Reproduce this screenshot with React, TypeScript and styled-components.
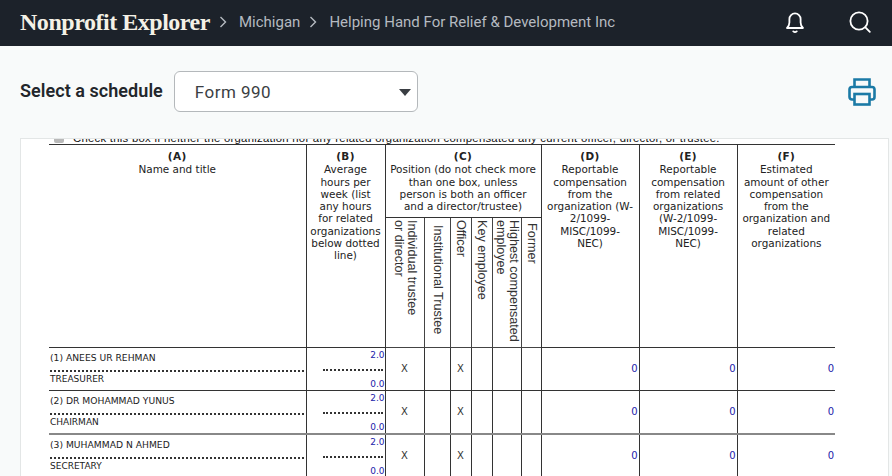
import React from "react";
import styled, { createGlobalStyle } from "styled-components";

const Global = createGlobalStyle`
  html, body { margin: 0; padding: 0; height: 100%; overflow: hidden; background: #f8fafa; }
  #root { height: 100%; }
  * { box-sizing: border-box; }
`;

const Page = styled.div`
  display: flex;
  flex-direction: column;
  height: 476px;
  background: #f8fafa;
`;

const TopBar = styled.header`
  display: flex;
  align-items: center;
  height: 46px;
  flex: none;
  padding: 0 20px 2px;
  background: #1c222a;
`;

const Brand = styled.span`
  font: bold 24px/24px "Liberation Serif", serif;
  letter-spacing: -0.47px;
  color: #f4f1e6;
`;

const Crumb = styled.span`
  font: 400 15px/20px Roboto, sans-serif;
  color: #b5bac0;
`;

const Chevron = styled.svg`
  flex: none;
  margin: 0 12px 0 9px;
  width: 8px;
  height: 12px;
  fill: none;
  stroke: #b5bac0;
  stroke-width: 1.4;
`;

const BarIcons = styled.div`
  display: flex;
  align-items: center;
  gap: 43px;
  margin-left: auto;
  margin-right: 1px;
`;

const BarIcon = styled.svg`
  display: block;
  width: 22px;
  height: 24px;
  fill: none;
  stroke: #fff;
  stroke-width: 1.8;
  stroke-linecap: round;
  stroke-linejoin: round;
`;

const Toolbar = styled.div`
  display: flex;
  align-items: center;
  height: 92px;
  flex: none;
  padding: 0 16px 1px 20px;
`;

const SelectLabel = styled.label`
  font: 600 18px/22px Roboto, sans-serif;
  letter-spacing: 0.05px;
  color: #22262b;
  margin: 0 11px 2px 0;
`;

const SelectWrap = styled.div`
  position: relative;
  width: 244px;
  height: 41px;
`;

const Select = styled.select`
  appearance: none;
  width: 100%;
  height: 100%;
  padding: 0 20px;
  border: 1px solid #b4b8bb;
  border-radius: 6px;
  background: #fff;
  font: 400 17px Roboto, sans-serif;
  letter-spacing: 0.45px;
  color: #3a3e43;
`;

const Caret = styled.span`
  position: absolute;
  top: 18px;
  right: 7px;
  width: 0;
  height: 0;
  border-left: 6.5px solid transparent;
  border-right: 6.5px solid transparent;
  border-top: 7px solid #3a3e43;
  pointer-events: none;
`;

const PrintIcon = styled.svg`
  display: block;
  margin-left: auto;
  width: 28px;
  height: 28px;
  fill: none;
  stroke: #1b7aa6;
  stroke-width: 2.6;
`;

const DocPanel = styled.div`
  flex: 1;
  min-height: 0;
  margin: 0 3px 0 20px;
  padding-left: 28px;
  overflow: hidden;
  background: #fff;
  border: 1px solid #e3e6e6;
  border-bottom: 0;
`;

const CheckLine = styled.div`
  display: flex;
  align-items: center;
  height: 12px;
  margin-top: -7px;
  padding-left: 5px;
  gap: 9px;
  font: 11.3px/12px "Liberation Sans", Arial, sans-serif;
  letter-spacing: 0.28px;
  white-space: nowrap;
  color: #111;
`;

const CheckBox = styled.span`
  width: 10px;
  height: 10px;
  background: #b9b9b9;
  border-radius: 2px;
`;

const FormTable = styled.table`
  table-layout: fixed;
  width: 786px;
  border-collapse: collapse;
  font: 10.45px/12.3px "DejaVu Sans", Verdana, sans-serif;
  color: #222;
`;

const HeadCell = styled.th`
  padding: 5px 0 0;
  vertical-align: top;
  font-weight: 400;
  text-align: center;
  white-space: nowrap;
  border: 1px solid #333;
  &:first-child { border-left: 0; }
  &:last-child { border-right: 0; }
`;

const Letter = styled.b`
  display: block;
  margin-bottom: 1px;
  font-weight: 700;
  letter-spacing: 0.4px;
`;

const SideCell = styled.th`
  padding: 2px 0 0;
  height: 129px;
  vertical-align: top;
  font-weight: 400;
  border: 1px solid #444;
`;

const SideText = styled.span<{ $drop: number }>`
  display: block;
  width: fit-content;
  height: 122px;
  margin: ${(p) => p.$drop}px auto 0;
  writing-mode: vertical-rl;
  white-space: nowrap;
  text-align: left;
  font: 12.6px/13px "Liberation Sans", Arial, sans-serif;
  color: #333;
`;

const Row = styled.tr`
  height: 43px;
`;

const Cell = styled.td<{ $heavy?: boolean }>`
  padding: 0;
  height: 43px;
  border: 1px solid #333;
  border-bottom: ${(p) => (p.$heavy ? "2px solid #888" : "1px solid #333")};
  &:first-child { border-left: 0; }
  &:last-child { border-right: 0; }
`;

const NameStack = styled.div`
  display: flex;
  flex-direction: column;
  height: 42px;
  padding: 4px 2px 0 1px;
  font: 9.2px/12px "DejaVu Sans", Verdana, sans-serif;
  color: #222;
`;

const NameText = styled.span`
  height: 18px;
`;

const TitleText = styled.span`
  margin-top: 1px;
  font-size: 9px;
`;

const DotRule = styled.div`
  height: 0;
  border-top: 2px dotted #333;
`;

const HoursStack = styled.div`
  display: flex;
  flex-direction: column;
  justify-content: space-between;
  height: 42px;
  padding-top: 2px;
  text-align: right;
  font: 9px/11px "DejaVu Sans", Verdana, sans-serif;
  color: #2222aa;
`;

const HoursRule = styled(DotRule)`
  width: 60px;
  margin-left: auto;
  margin-right: 2px;
`;

const Mark = styled.div`
  text-align: center;
  font: 10px/12px "DejaVu Sans", Verdana, sans-serif;
  color: #333;
`;

const Amount = styled.div`
  padding-right: 1px;
  text-align: right;
  font: 10px/12px "DejaVu Sans", Verdana, sans-serif;
  color: #2222aa;
`;

const people = [
  { name: "(1) ANEES UR REHMAN", title: "TREASURER" },
  { name: "(2) DR MOHAMMAD YUNUS", title: "CHAIRMAN" },
  { name: "(3) MUHAMMAD N AHMED", title: "SECRETARY" },
];

const positions = [
  { lines: ["Individual trustee", "or director"], drop: 0 },
  { lines: ["Institutional Trustee"], drop: 5 },
  { lines: ["Officer"], drop: 0 },
  { lines: ["Key employee"], drop: 0 },
  { lines: ["Highest compensated", "employee"], drop: 0 },
  { lines: ["Former"], drop: 3 },
];

const marks = [true, false, true, false, false, false];

const headerLines = {
  b: ["Average", "hours per", "week (list", "any hours", "for related", "organizations", "below dotted", "line)"],
  c: ["Position (do not check more", "than one box, unless", "person is both an officer", "and a director/trustee)"],
  d: ["Reportable", "compensation", "from the", "organization (W-", "2/1099-", "MISC/1099-", "NEC)"],
  e: ["Reportable", "compensation", "from related", "organizations", "(W-2/1099-", "MISC/1099-", "NEC)"],
  f: ["Estimated", "amount of other", "compensation", "from the", "organization and", "related", "organizations"],
};

const Lines = ({ items }: { items: string[] }) => (
  <>
    {items.map((line, i) => (
      <React.Fragment key={line}>
        {i > 0 && <br />}
        {line}
      </React.Fragment>
    ))}
  </>
);

const ChevronIcon = () => (
  <Chevron viewBox="0 0 8 12">
    <path d="M1.5 1l5 5-5 5" />
  </Chevron>
);

export default function App() {
  return (
    <Page>
      <Global />
      <TopBar>
        <Brand>Nonprofit Explorer</Brand>
        <ChevronIcon />
        <Crumb>Michigan</Crumb>
        <ChevronIcon />
        <Crumb>Helping Hand For Relief &amp; Development Inc</Crumb>
        <BarIcons>
          <BarIcon viewBox="0 0 22 24">
            <path d="M3 18c1.6-1.4 2.4-3 2.4-5.4V9a5.6 5.6 0 0 1 11.2 0v3.6c0 2.4.8 4 2.4 5.4z" />
            <path d="M9.3 21.4c.9.8 2.5.8 3.4 0" />
          </BarIcon>
          <BarIcon viewBox="0 0 22 24">
            <circle cx="10" cy="11" r="8.6" />
            <path d="M16.4 17.4l4.4 4.4" />
          </BarIcon>
        </BarIcons>
      </TopBar>
      <Toolbar>
        <SelectLabel htmlFor="schedule">Select a schedule</SelectLabel>
        <SelectWrap>
          <Select id="schedule" defaultValue="Form 990">
            <option>Form 990</option>
          </Select>
          <Caret />
        </SelectWrap>
        <PrintIcon viewBox="0 0 28 28">
          <path d="M6.5 9V1.5h15V9" />
          <rect x="1.5" y="9" width="25" height="12.5" rx="2.5" />
          <rect x="6.5" y="16" width="15" height="10.5" fill="#f8fafa" />
        </PrintIcon>
      </Toolbar>
      <DocPanel>
        <CheckLine>
          <CheckBox />
          Check this box if neither the organization nor any related organization compensated any current officer, director, or trustee.
        </CheckLine>
        <FormTable>
          <colgroup>
            <col style={{ width: 257 }} />
            <col style={{ width: 79 }} />
            <col style={{ width: 39 }} />
            <col style={{ width: 26 }} />
            <col style={{ width: 21 }} />
            <col style={{ width: 21 }} />
            <col style={{ width: 29 }} />
            <col style={{ width: 20 }} />
            <col style={{ width: 98 }} />
            <col style={{ width: 98 }} />
            <col style={{ width: 98 }} />
          </colgroup>
          <thead>
            <tr style={{ height: 73 }}>
              <HeadCell rowSpan={2}><Letter>(A)</Letter>Name and title</HeadCell>
              <HeadCell rowSpan={2}><Letter>(B)</Letter><Lines items={headerLines.b} /></HeadCell>
              <HeadCell colSpan={6}><Letter>(C)</Letter><Lines items={headerLines.c} /></HeadCell>
              <HeadCell rowSpan={2}><Letter>(D)</Letter><Lines items={headerLines.d} /></HeadCell>
              <HeadCell rowSpan={2}><Letter>(E)</Letter><Lines items={headerLines.e} /></HeadCell>
              <HeadCell rowSpan={2}><Letter>(F)</Letter><Lines items={headerLines.f} /></HeadCell>
            </tr>
            <tr>
              {positions.map((pos) => (
                <SideCell key={pos.lines[0]}>
                  <SideText $drop={pos.drop}><Lines items={pos.lines} /></SideText>
                </SideCell>
              ))}
            </tr>
          </thead>
          <tbody>
            {people.map((person, index) => (
              <Row key={person.name}>
                <Cell $heavy={index === 1}>
                  <NameStack>
                    <NameText>{person.name}</NameText>
                    <DotRule />
                    <TitleText>{person.title}</TitleText>
                  </NameStack>
                </Cell>
                <Cell $heavy={index === 1}>
                  <HoursStack>
                    <span>2.0</span>
                    <HoursRule />
                    <span>0.0</span>
                  </HoursStack>
                </Cell>
                {marks.map((checked, i) => (
                  <Cell key={i} $heavy={index === 1}>
                    <Mark>{checked ? "X" : ""}</Mark>
                  </Cell>
                ))}
                {[0, 1, 2].map((col) => (
                  <Cell key={col} $heavy={index === 1}>
                    <Amount>0</Amount>
                  </Cell>
                ))}
              </Row>
            ))}
          </tbody>
        </FormTable>
      </DocPanel>
    </Page>
  );
}
